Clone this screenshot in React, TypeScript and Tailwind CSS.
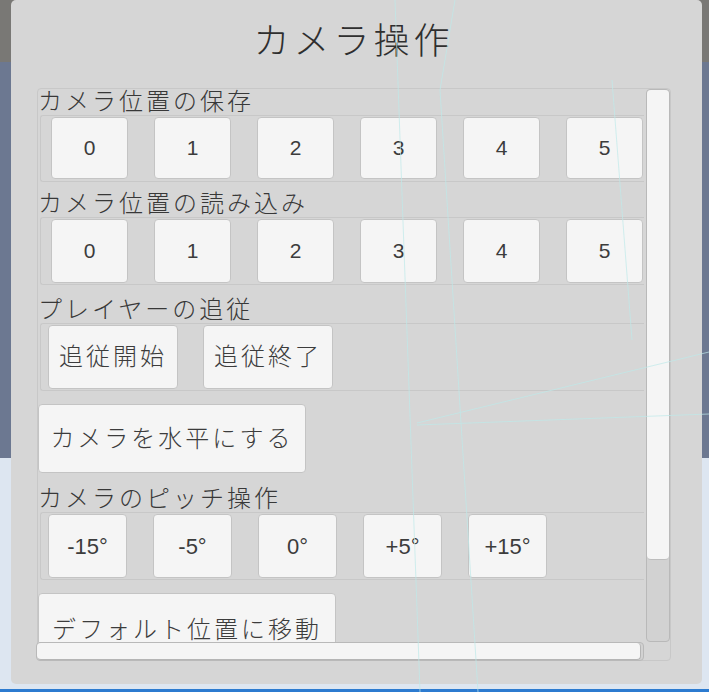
import type { ReactNode } from 'react';

const FONT = "font-['Liberation_Sans','Noto_Sans_CJK_JP',sans-serif]";

function Label({ children, className = '' }: { children: ReactNode; className?: string }) {
  return (
    <div className={`-ml-[2px] h-[26px] whitespace-nowrap text-[24px] font-light leading-[26px] tracking-[3px] text-[#383838] ${className}`}>
      {children}
    </div>
  );
}

function Btn({ children, className = '' }: { children: ReactNode; className?: string }) {
  return (
    <button
      type="button"
      className={`flex shrink-0 items-center justify-center whitespace-nowrap rounded-[4px] border border-[#c4c4c4] bg-[#f5f5f5] text-[#3c3c3c] ${className}`}
    >
      {children}
    </button>
  );
}

function Row({ children, className = '' }: { children: ReactNode; className?: string }) {
  return (
    <div className={`flex w-[640px] shrink-0 rounded-l-[3px] border-y border-l border-[#c8c8c8] py-[1px] ${className}`}>
      {children}
    </div>
  );
}

export default function App() {
  const slots = ['0', '1', '2', '3', '4', '5'];
  const pitch = ['-15°', '-5°', '0°', '+5°', '+15°'];

  return (
    <div
      className={`relative flex h-[692px] w-[709px] flex-col overflow-hidden bg-[linear-gradient(to_bottom,#797875_0px,#797875_62px,#6c7891_62px,#6c7891_458px,#dde6f1_458px,#dde6f1_689px,#2c7bd0_689px)] pb-[8px] pl-[11px] pr-[7px] ${FONT}`}
    >
      <div className="flex flex-1 flex-col rounded-[5px] bg-[#d6d6d6]">
        <div className="flex h-[88px] items-center justify-center pb-[4px] pr-[6px] text-[36px] font-light tracking-[4px] text-[#2f2f2f]">
          カメラ操作
        </div>

        <div className="ml-[26px] grid h-[573px] w-[634px] grid-cols-[606px_28px] grid-rows-[553px_20px] rounded-[4px] border border-[#c8c8c8]">
          {/* viewport */}
          <div className="flex flex-col overflow-hidden pl-[2px]">
            <Label>カメラ位置の保存</Label>
            <Row className="h-[67px] gap-[26px] pl-[10px]">
              {slots.map((s) => (
                <Btn key={s} className="h-[62px] w-[77px] text-[21px]">
                  {s}
                </Btn>
              ))}
            </Row>

            <Label className="mt-[9px]">カメラ位置の読み込み</Label>
            <Row className="h-[68px] gap-[26px] pl-[10px]">
              {slots.map((s) => (
                <Btn key={s} className="h-[64px] w-[77px] text-[21px]">
                  {s}
                </Btn>
              ))}
            </Row>

            <Label className="mt-[12px]">プレイヤーの追従</Label>
            <Row className="h-[68px] w-[330px] gap-[25px] pl-[7px]">
              <Btn className="h-[64px] w-[130px] text-[24px] font-light tracking-[3px]">追従開始</Btn>
              <Btn className="h-[64px] w-[130px] text-[24px] font-light tracking-[3px]">追従終了</Btn>
            </Row>

            <Btn className="-ml-[2px] mt-[13px] h-[69px] w-[268px] text-[24px] font-light tracking-[3px]">カメラを水平にする</Btn>

            <Label className="mt-[13px]">カメラのピッチ操作</Label>
            <Row className="h-[68px] gap-[26px] pl-[7px]">
              {pitch.map((p) => (
                <Btn key={p} className="h-[64px] w-[79px] text-[22px]">
                  {p}
                </Btn>
              ))}
            </Row>

            <Btn className="-ml-[2px] mt-[13px] h-[69px] w-[298px] items-start pt-[18px] text-[24px] font-light tracking-[3px]">
              デフォルト位置に移動
            </Btn>
          </div>

          {/* vertical scrollbar */}
          <div className="ml-[2px] mr-[2px] flex flex-col rounded-[4px] border border-[#b9b9b9] bg-[#d2d2d2]">
            <div className="h-[470px] rounded-[4px] border-b border-[#bdbdbd] bg-[#f5f5f5]" />
          </div>

          {/* horizontal scrollbar */}
          <div className="-ml-[2px] mb-[1px] flex rounded-[4px] border border-[#b9b9b9] bg-[#d2d2d2] pr-[2px]">
            <div className="flex-1 rounded-[4px] border-r border-b border-[#b5b5b5] bg-[#f5f5f5]" />
          </div>
          <div />
        </div>
      </div>

      {/* scene gizmo lines showing through */}
      <svg
        className="pointer-events-none absolute left-0 top-0 h-[692px] w-[709px]"
        viewBox="0 0 709 692"
        fill="none"
      >
        <g stroke="#bfeaea" strokeWidth="1" opacity="0.7">
          <path d="M395 0 L420 692" />
          <path d="M455 0 L440 90 L478 692" />
          <path d="M612 80 L632 340" />
          <path d="M417 423 L709 352" />
          <path d="M417 425 L709 414" />
        </g>
      </svg>
    </div>
  );
}
